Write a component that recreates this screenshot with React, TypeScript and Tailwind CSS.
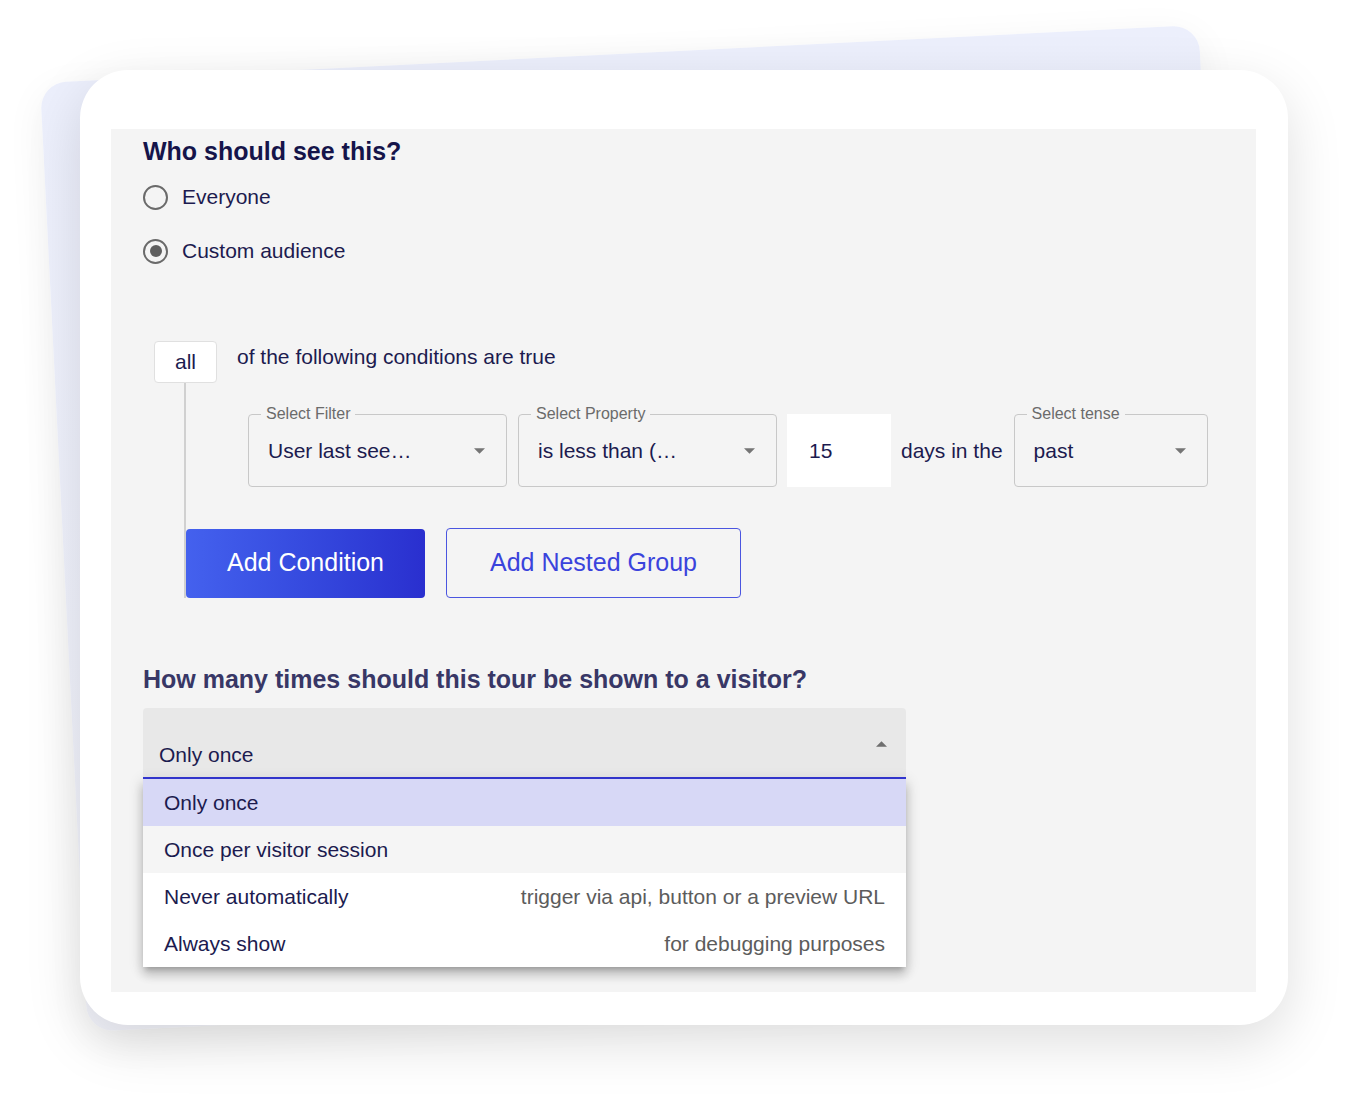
import React from 'react';

// ---------------------------------------------------------------------------
// Small pieces
// ---------------------------------------------------------------------------

function Caret({ up = false }: { up?: boolean }) {
  return (
    <svg width="11" height="6" viewBox="0 0 10 5" aria-hidden="true" className="shrink-0">
      {up ? <path d="M0 5 L5 0 L10 5 Z" fill="#6f6f6f" /> : <path d="M0 0 L5 5 L10 0 Z" fill="#757575" />}
    </svg>
  );
}

function Radio({ label, checked }: { label: string; checked?: boolean }) {
  return (
    <div className="flex h-[42px] items-center">
      <span className="flex h-[25px] w-[25px] items-center justify-center rounded-full border-2 border-[#6a6a6a]">
        {checked && <span className="h-[12px] w-[12px] rounded-full bg-[#5f5f5f]" />}
      </span>
      <span className="ml-[14px] text-[21px] leading-[24px] text-[#1c1b4f]">{label}</span>
    </div>
  );
}

function OutlinedSelect({ label, value, className }: { label: string; value: string; className: string }) {
  return (
    <div className={`relative h-[73px] shrink-0 rounded-[4px] border border-[#c8c8c8] ${className}`}>
      <span className="absolute -top-[10px] left-[12px] bg-[#f4f4f4] px-[5px] text-[16px] leading-[18px] text-[#6b6b6b]">
        {label}
      </span>
      <div className="flex h-full items-center justify-between pl-[19px] pr-[21px]">
        <span className="text-[21px] leading-[24px] text-[#1c1b4f]">{value}</span>
        <Caret />
      </div>
    </div>
  );
}

const options: { label: string; hint?: string; bg: string }[] = [
  { label: 'Only once', bg: 'bg-[#d7d8f6]' },
  { label: 'Once per visitor session', bg: 'bg-[#f5f5f5]' },
  { label: 'Never automatically', hint: 'trigger via api, button or a preview URL', bg: 'bg-white' },
  { label: 'Always show', hint: 'for debugging purposes', bg: 'bg-white' },
];

// ---------------------------------------------------------------------------
// App
// ---------------------------------------------------------------------------

export default function App() {
  return (
    <div className="relative h-[1100px] w-[1364px] overflow-hidden bg-white pt-[70px] font-['Liberation_Sans',Arial,Helvetica,sans-serif]">
      {/* tilted card behind */}
      <div className="absolute left-[40px] top-[83px] h-[950px] w-[1160px] origin-top-left -rotate-[2.87deg] rounded-[26px] bg-linear-to-b from-[#eceffc] to-[#f3f4fb] shadow-[0_10px_40px_rgba(0,0,0,0.06)]" />

      {/* front card */}
      <div className="relative z-10 ml-[80px] h-[955px] w-[1208px] rounded-[48px] bg-white pl-[31px] pt-[59px] shadow-[0_18px_55px_rgba(0,0,0,0.13)]">
        <div className="h-[863px] w-[1145px] bg-[#f4f4f4] pl-[32px] pt-[7px]">
          <h2 className="text-[25px] font-bold leading-[30px] text-[#15144a]">Who should see this?</h2>

          <div className="mt-[10px] flex flex-col gap-[12px]">
            <Radio label="Everyone" />
            <Radio label="Custom audience" checked />
          </div>

          {/* all / conditions */}
          <div className="ml-[11px] mt-[69px] flex items-start">
            <div className="flex h-[42px] w-[63px] items-center justify-center rounded-[4px] border border-[#e0e0e0] bg-white text-[21px] leading-[24px] text-[#1c1b4f]">
              all
            </div>
            <span className="ml-[20px] mt-[4px] text-[21px] leading-[24px] text-[#1c1b4f]">
              of the following conditions are true
            </span>
          </div>

          <div className="ml-[41px] border-l-2 border-[#d0d0d0] pt-[31px]">
            <div className="flex items-center pl-[62px]">
              <OutlinedSelect label="Select Filter" value="User last see…" className="w-[259px]" />
              <OutlinedSelect label="Select Property" value="is less than (…" className="ml-[11px] w-[259px]" />
              <div className="ml-[10px] flex h-[73px] w-[104px] items-center bg-white pl-[22px] text-[21px] text-[#1c1b4f]">
                15
              </div>
              <span className="ml-[10px] text-[21px] leading-[24px] text-[#1c1b4f]">days in the</span>
              <OutlinedSelect label="Select tense" value="past" className="ml-[11px] w-[194px]" />
            </div>

            <div className="mt-[41px] flex items-center">
              <button
                type="button"
                className="flex h-[69px] w-[239px] items-center justify-center rounded-[4px] bg-linear-to-r from-[#4461ee] to-[#2a2fcf] text-[25px] text-white"
              >
                Add Condition
              </button>
              <button
                type="button"
                className="ml-[21px] flex h-[70px] w-[295px] items-center justify-center rounded-[4px] border border-[#4b55e0] text-[25px] text-[#3a43dc]"
              >
                Add Nested Group
              </button>
            </div>
          </div>

          <h2 className="mt-[66px] text-[25px] font-bold leading-[30px] text-[#383766]">
            How many times should this tour be shown to a visitor?
          </h2>

          {/* filled select with open menu */}
          <div className="relative mt-[14px] w-[763px]">
            <div className="relative h-[71px] rounded-t-[4px] border-b-2 border-[#3538d6] bg-[#e8e8e8] pl-[16px] pt-[35px]">
              <span className="text-[21px] leading-[24px] text-[#1c1b4f]">Only once</span>
              <span className="absolute right-[19px] top-[33px]">
                <Caret up />
              </span>
            </div>
            <div className="absolute left-0 top-full w-full rounded-b-[4px] bg-white shadow-[0_5px_5px_-3px_rgba(0,0,0,0.2),0_8px_10px_1px_rgba(0,0,0,0.14),0_3px_14px_2px_rgba(0,0,0,0.12)]">
              {options.map((o) => (
                <div
                  key={o.label}
                  className={`flex h-[47px] items-center justify-between px-[21px] text-[21px] leading-[24px] ${o.bg}`}
                >
                  <span className="text-[#1c1b4f]">{o.label}</span>
                  {o.hint && <span className="text-[#5c5c5c]">{o.hint}</span>}
                </div>
              ))}
            </div>
          </div>
        </div>
      </div>
    </div>
  );
}
